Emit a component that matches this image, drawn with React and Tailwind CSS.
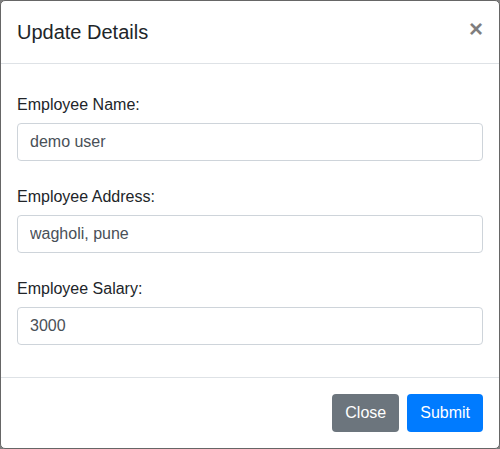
import { useState } from 'react'

const FIELDS = [
  { id: 'name', label: 'Employee Name:', value: 'demo user' },
  { id: 'address', label: 'Employee Address:', value: 'wagholi, pune' },
  { id: 'salary', label: 'Employee Salary:', value: '3000' },
]

export default function App() {
  const [values, setValues] = useState(() => Object.fromEntries(FIELDS.map((f) => [f.id, f.value])))

  return (
    <div className="h-[449px] w-[500px] bg-[#7f7f7f] font-['Liberation_Sans',Arial,sans-serif] text-[#212529]">
      <div className="flex h-full flex-col rounded-[5px] border border-[#666666] bg-white">
        <header className="flex h-[63px] shrink-0 items-start justify-between border-b border-[#dee2e6] p-4">
          <h5 className="text-[20px] leading-[30px] font-medium">Update Details</h5>
          <button
            type="button"
            aria-label="Close"
            className="-mt-[3px] text-[24px] leading-[30px] font-bold text-black opacity-50 [text-shadow:0_1px_0_#fff]"
          >
            ×
          </button>
        </header>

        <div className="flex flex-1 flex-col gap-[24px] px-4 pt-[29px]">
          {FIELDS.map((f) => (
            <div key={f.id} className="flex flex-col">
              <label htmlFor={f.id} className="mb-[6px] text-base leading-6">
                {f.label}
              </label>
              <input
                id={f.id}
                value={values[f.id]}
                onChange={(e) => setValues({ ...values, [f.id]: e.target.value })}
                className="h-[38px] w-full rounded border border-[#ced4da] px-3 text-base leading-6 text-[#495057] outline-none"
              />
            </div>
          ))}
        </div>

        <footer className="flex h-[71px] shrink-0 items-center justify-end gap-2 border-t border-[#dee2e6] px-4">
          <button type="button" className="h-[38px] rounded bg-[#6c757d] px-[13px] text-base leading-6 text-white">
            Close
          </button>
          <button type="button" className="h-[38px] rounded bg-[#007bff] px-[13px] text-base leading-6 text-white">
            Submit
          </button>
        </footer>
      </div>
    </div>
  )
}
